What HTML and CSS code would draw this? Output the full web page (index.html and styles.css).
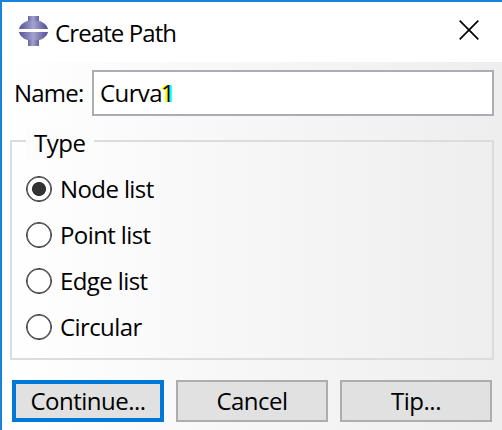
FILE: index.html
```html
<!DOCTYPE html>
<html lang="en">
<head>
<meta charset="utf-8">
<title>Create Path</title>
<link rel="stylesheet" href="styles.css">
</head>
<body>
<main class="window">
  <header class="titlebar">
    <svg class="app-icon" width="30" height="30" viewBox="0 0 30 30" aria-hidden="true">
      <defs>
        <linearGradient id="metal"><stop offset="0" stop-color="#55539b"/><stop offset=".5" stop-color="#a3a2cd"/><stop offset="1" stop-color="#504e93"/></linearGradient>
        <linearGradient id="stem"><stop offset="0" stop-color="#6665a4"/><stop offset=".45" stop-color="#a3a2cd"/><stop offset="1" stop-color="#62609f"/></linearGradient>
      </defs>
      <path fill="url(#metal)" d="M0 13C1 8 7 4 14.500 4S28 8 29 13zM0 16h29c-1 5-7 9-14.500 9S1 21 0 16z"/>
      <path fill="url(#stem)" d="M9 0h11v5H9zM9 24h11v6H9z"/>
    </svg>
    <h1 class="title">Create Path</h1>
    <svg class="close" width="20" height="20" viewBox="0 0 20 20" aria-label="Close"><path d="M.7.7l18.600 18.600M19.300.7L.7 19.300" stroke="#000" stroke-width="1.700"/></svg>
  </header>
  <form class="content">
    <div class="name-row">
      <span class="name-label">Name:</span>
      <div class="field"><span class="value">Curva</span><span class="selected">1</span></div>
    </div>
    <fieldset class="group">
      <legend>Type</legend>
      <label class="option"><i class="radio checked"></i><span>Node list</span></label>
      <label class="option"><i class="radio"></i><span>Point list</span></label>
      <label class="option"><i class="radio"></i><span>Edge list</span></label>
      <label class="option"><i class="radio"></i><span>Circular</span></label>
    </fieldset>
    <div class="buttons">
      <button type="button" class="default">Continue...</button>
      <button type="button">Cancel</button>
      <button type="button">Tip...</button>
    </div>
  </form>
</main>
</body>
</html>
```

FILE: styles.css
```css
* { box-sizing: border-box; }
body { margin: 0; overflow: hidden; font: 24px/32px "Open Sans", "Noto Sans", sans-serif; color: #000; letter-spacing: -0.5px; }
.window { width: 502px; height: 430px; border-top: 2px solid #1883d7; border-left: 2px solid #1883d7; background: #fff; }
.titlebar { display: flex; align-items: center; height: 60px; padding: 0 23px 0 17px; }
.app-icon { display: block; margin-top: -2px; }
.title { margin: 2px auto 0 6px; font-size: 24px; font-weight: 400; letter-spacing: -0.9px; }
.close { display: block; margin-top: -4px; }
.content { height: 368px; padding: 8px 8px 0; background: linear-gradient(90deg, #fff, #f6f6f6 52%, #eee); }
.name-row { display: flex; height: 46px; align-items: center; }
.name-label { width: 82px; padding-left: 4px; white-space: nowrap; letter-spacing: -0.8px; }
.field { flex: 1; height: 46px; padding: 5px 6px; border: 2px solid #abadb3; background: #fff; display: flex; }
.value { letter-spacing: -0.6px; }
.selected { margin-left: -1px; color: #000; text-shadow: -1px 0 #ff0, -2px 0 #ff0, 1px 0 #0ff, 2px 0 #0ff; }
.group { position: relative; height: 220px; margin: 24px 0 0; padding: 24px 14px 0; border: 2px solid #dcdcdc; }
legend { float: left; position: absolute; top: -15px; left: 14px; width: 68px; height: 32px; padding: 0 8px; background: #fcfcfc; }
.option { display: flex; align-items: center; height: 46px; gap: 8px; letter-spacing: -0.6px; }
.radio { width: 26px; height: 26px; border: 1.500px solid #333; border-radius: 50%; background: #fff; box-shadow: inset 0 0 0 .7px #444; }
.checked { background: radial-gradient(circle, #333 6.600px, #fff 7.400px); }
.buttons { display: flex; gap: 12px; margin: 20px 2px 0; }
button { width: 152px; height: 42px; padding: 0; border: 2px solid #adadad; background: #e1e1e1; font: inherit; letter-spacing: inherit; color: #000; }
.default { border: 4px solid #0078d7; }
```
